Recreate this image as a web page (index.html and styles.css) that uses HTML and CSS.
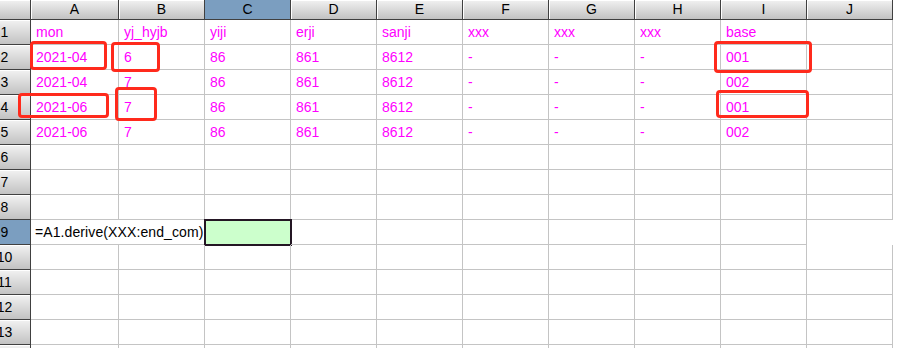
FILE: index.html
```html
<!DOCTYPE html>
<html lang="en">
<head>
    <meta charset="UTF-8">
    <title>Sheet</title>
    <link rel="stylesheet" href="styles.css">
</head>
<body>

    <div class="sheet">
        <div class="row head">
            <div class="hdr"></div>
            <div class="hdr">A</div><div class="hdr">B</div><div class="hdr sel">C</div><div class="hdr">D</div><div class="hdr">E</div>
            <div class="hdr">F</div><div class="hdr">G</div><div class="hdr">H</div><div class="hdr">I</div><div class="hdr">J</div>
        </div>
        <div class="row">
            <div class="num">1</div>
            <div class="cell">mon</div><div class="cell">yj_hyjb</div><div class="cell">yiji</div><div class="cell">erji</div><div class="cell">sanji</div>
            <div class="cell">xxx</div><div class="cell">xxx</div><div class="cell">xxx</div><div class="cell">base</div><div class="cell"></div>
        </div>
        <div class="row">
            <div class="num">2</div>
            <div class="cell">2021-04</div><div class="cell">6</div><div class="cell">86</div><div class="cell">861</div><div class="cell">8612</div>
            <div class="cell">-</div><div class="cell">-</div><div class="cell">-</div><div class="cell">001</div><div class="cell"></div>
        </div>
        <div class="row">
            <div class="num">3</div>
            <div class="cell">2021-04</div><div class="cell">7</div><div class="cell">86</div><div class="cell">861</div><div class="cell">8612</div>
            <div class="cell">-</div><div class="cell">-</div><div class="cell">-</div><div class="cell">002</div><div class="cell"></div>
        </div>
        <div class="row">
            <div class="num">4</div>
            <div class="cell">2021-06</div><div class="cell">7</div><div class="cell">86</div><div class="cell">861</div><div class="cell">8612</div>
            <div class="cell">-</div><div class="cell">-</div><div class="cell">-</div><div class="cell">001</div><div class="cell"></div>
        </div>
        <div class="row">
            <div class="num">5</div>
            <div class="cell">2021-06</div><div class="cell">7</div><div class="cell">86</div><div class="cell">861</div><div class="cell">8612</div>
            <div class="cell">-</div><div class="cell">-</div><div class="cell">-</div><div class="cell">002</div><div class="cell"></div>
        </div>
        <div class="row">
            <div class="num">6</div>
            <div class="cell"></div><div class="cell"></div><div class="cell"></div><div class="cell"></div><div class="cell"></div>
            <div class="cell"></div><div class="cell"></div><div class="cell"></div><div class="cell"></div><div class="cell"></div>
        </div>
        <div class="row">
            <div class="num">7</div>
            <div class="cell"></div><div class="cell"></div><div class="cell"></div><div class="cell"></div><div class="cell"></div>
            <div class="cell"></div><div class="cell"></div><div class="cell"></div><div class="cell"></div><div class="cell"></div>
        </div>
        <div class="row">
            <div class="num">8</div>
            <div class="cell"></div><div class="cell"></div><div class="cell"></div><div class="cell"></div><div class="cell"></div>
            <div class="cell"></div><div class="cell"></div><div class="cell"></div><div class="cell"></div><div class="cell"></div>
        </div>
        <div class="row">
            <div class="num sel">9</div>
            <div class="cell formula">=A1.derive(XXX:end_com)</div><div class="cell active"></div><div class="cell"></div><div class="cell"></div>
            <div class="cell"></div><div class="cell"></div><div class="cell"></div><div class="cell"></div>
        </div>
        <div class="row">
            <div class="num">10</div>
            <div class="cell"></div><div class="cell"></div><div class="cell"></div><div class="cell"></div><div class="cell"></div>
            <div class="cell"></div><div class="cell"></div><div class="cell"></div><div class="cell"></div><div class="cell"></div>
        </div>
        <div class="row">
            <div class="num">11</div>
            <div class="cell"></div><div class="cell"></div><div class="cell"></div><div class="cell"></div><div class="cell"></div>
            <div class="cell"></div><div class="cell"></div><div class="cell"></div><div class="cell"></div><div class="cell"></div>
        </div>
        <div class="row">
            <div class="num">12</div>
            <div class="cell"></div><div class="cell"></div><div class="cell"></div><div class="cell"></div><div class="cell"></div>
            <div class="cell"></div><div class="cell"></div><div class="cell"></div><div class="cell"></div><div class="cell"></div>
        </div>
        <div class="row">
            <div class="num">13</div>
            <div class="cell"></div><div class="cell"></div><div class="cell"></div><div class="cell"></div><div class="cell"></div>
            <div class="cell"></div><div class="cell"></div><div class="cell"></div><div class="cell"></div><div class="cell"></div>
        </div>
        <div class="row">
            <div class="num">14</div>
            <div class="cell"></div><div class="cell"></div><div class="cell"></div><div class="cell"></div><div class="cell"></div>
            <div class="cell"></div><div class="cell"></div><div class="cell"></div><div class="cell"></div><div class="cell"></div>
        </div>

        <!-- red marks drawn over the sheet -->
        <div class="mark m1"></div>
        <div class="mark m2"></div>
        <div class="mark m3"></div>
        <div class="mark m4"></div>
        <div class="mark m5"></div>
        <div class="mark m6"></div>
    </div>

</body>
</html>
```

FILE: styles.css
```css
body {
    margin: 0;
    width: 912px;
    height: 348px;
    overflow: hidden;
    background-color: white;
    font-family: "Liberation Sans", Arial, sans-serif;
    font-size: 14px;
}
.sheet {
    position: relative;
    margin-left: -21px;
    width: 914px;
    height: 348px;
    overflow: hidden;
}
.row {
    display: grid;
    grid-template-columns: 52px 88px repeat(9, 86px);
    height: 25px;
}
.row.head {
    height: 20px;
}
.hdr, .num {
    box-sizing: border-box;
    background: linear-gradient(#f2f2f2, #c2c2c2);
    border-right: 1px solid #404040;
    border-bottom: 1px solid #404040;
    box-shadow: inset 1px 1px 0 #ffffff;
    color: black;
    text-align: center;
    line-height: 19px;
}
.num {
    line-height: 24px;
}
.hdr.sel, .num.sel {
    background: #7b9ec0;
    box-shadow: none;
}
.cell {
    box-sizing: border-box;
    border-right: 1px solid #c4c4c4;
    border-bottom: 1px solid #c4c4c4;
    padding: 0 5px;
    line-height: 24px;
    color: #ff00ff;
    white-space: nowrap;
    overflow: hidden;
}
.cell.formula {
    grid-column: span 2;
    color: black;
    padding-left: 4px;
    padding-right: 0;
    letter-spacing: 0.1px;
}
.cell.active {
    background-color: #ccffcc;
    outline: 2px solid #241624;
    outline-offset: -1px;
}
.mark {
    position: absolute;
    box-sizing: border-box;
    border: 3px solid #ff2a1c;
    border-radius: 4px;
}
.m1 { left: 51px; top: 41px; width: 77px; height: 29px; }
.m2 { left: 132px; top: 42px; width: 49px; height: 30px; }
.m3 { left: 39px; top: 93px; width: 91px; height: 25px; }
.m4 { left: 136px; top: 87px; width: 42px; height: 34px; }
.m5 { left: 735px; top: 41px; width: 98px; height: 32px; }
.m6 { left: 737px; top: 90px; width: 93px; height: 28px; }
```
